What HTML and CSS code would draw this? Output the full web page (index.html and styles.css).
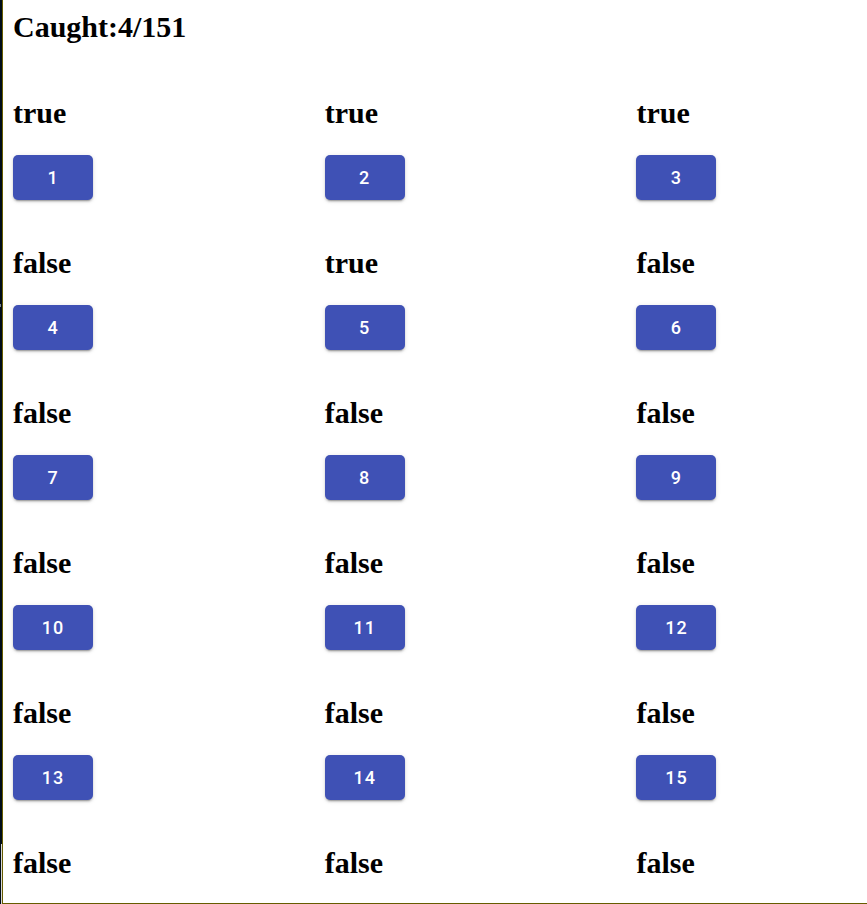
FILE: index.html
```html
<!DOCTYPE html>
<html lang="en">
<head>
<meta charset="utf-8">
<title>Caught</title>
<link rel="stylesheet" href="styles.css">
</head>
<body>
<div class="edge"><span class="edge-mark"></span><span class="edge-foot"></span></div>
<main class="page">
<h1 class="title">Caught:4/151</h1>
<div class="grid">
<section class="entry"><h2>true</h2><button type="button">1</button></section>
<section class="entry"><h2>true</h2><button type="button">2</button></section>
<section class="entry"><h2>true</h2><button type="button">3</button></section>
<section class="entry"><h2>false</h2><button type="button">4</button></section>
<section class="entry"><h2>true</h2><button type="button">5</button></section>
<section class="entry"><h2>false</h2><button type="button">6</button></section>
<section class="entry"><h2>false</h2><button type="button">7</button></section>
<section class="entry"><h2>false</h2><button type="button">8</button></section>
<section class="entry"><h2>false</h2><button type="button">9</button></section>
<section class="entry"><h2>false</h2><button type="button">10</button></section>
<section class="entry"><h2>false</h2><button type="button">11</button></section>
<section class="entry"><h2>false</h2><button type="button">12</button></section>
<section class="entry"><h2>false</h2><button type="button">13</button></section>
<section class="entry"><h2>false</h2><button type="button">14</button></section>
<section class="entry"><h2>false</h2><button type="button">15</button></section>
<section class="entry"><h2>false</h2></section>
<section class="entry"><h2>false</h2></section>
<section class="entry"><h2>false</h2></section>
</div>
</main>
</body>
</html>
```
FILE: styles.css
```css
* {
  box-sizing: border-box;
}

body {
  display: flex;
  min-height: 100vh;
  margin: 0;
  background: #fff;
  color: #000;
  font-family: "Liberation Serif", "Times New Roman", serif;
}

.edge {
  display: flex;
  flex: none;
  flex-direction: column;
  justify-content: space-between;
  width: 2px;
  padding-top: 304px;
  background: #000c18;
}

.edge-mark {
  width: 1px;
  height: 3px;
  background: #7b858d;
}

.edge-foot {
  height: 60px;
  border-right: 1px solid #d8d8d8;
}

.page {
  flex: 1;
  padding: 10px 0 0 10px;
  border-left: 1px solid #665c00;
  border-bottom: 1px solid #665c00;
}

.title,
.entry h2 {
  margin: 0;
  font-size: 30px;
  line-height: 34px;
  font-weight: bold;
}

.grid {
  display: grid;
  grid-template-columns: 73fr 73fr 54fr;
  row-gap: 46px;
  margin-top: 52px;
}

.entry h2 {
  margin-bottom: 25px;
}

.entry:nth-last-child(-n+3) h2 {
  margin-bottom: 0;
}

.entry button {
  display: block;
  width: 80px;
  height: 45px;
  padding: 0;
  border: 0;
  border-radius: 5px;
  background: #3f51b5;
  color: #fff;
  font-family: Roboto, sans-serif;
  font-size: 18px;
  font-weight: 500;
  letter-spacing: 1px;
  box-shadow: 0 3px 1px -2px rgba(0, 0, 0, 0.2), 0 2px 2px rgba(0, 0, 0, 0.14), 0 1px 5px rgba(0, 0, 0, 0.12);
}
```
